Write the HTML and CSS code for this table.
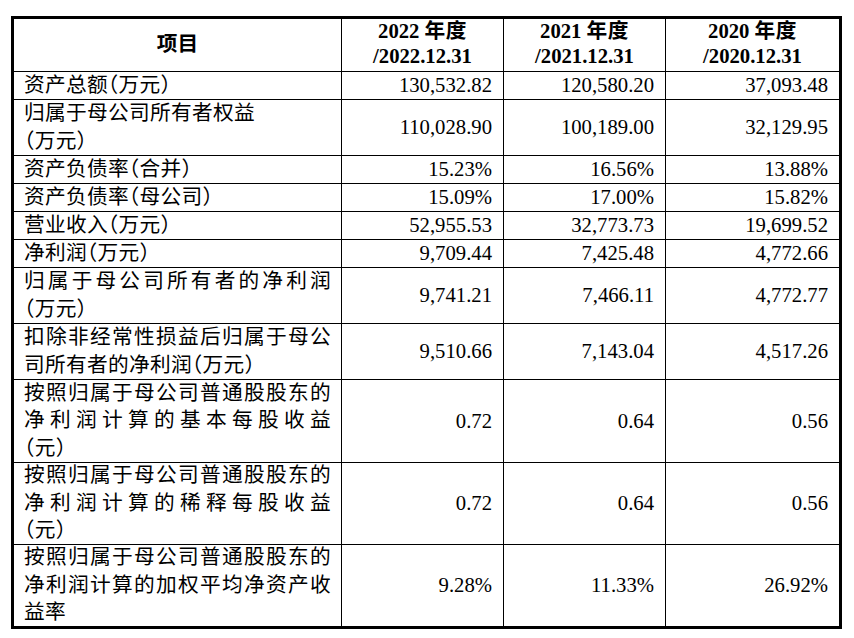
FILE: index.html
```html
<!DOCTYPE html>
<html lang="zh-CN">
<head>
<meta charset="utf-8">
<title>主要财务数据</title>
<link rel="stylesheet" href="styles.css">
</head>
<body>
<div class="tbl">
  <div class="c h"><span class="xm">项目</span></div>
  <div class="c h"><span>2022 <span class="cj">年度</span></span><span class="d">/2022.12.31</span></div>
  <div class="c h"><span>2021 <span class="cj">年度</span></span><span class="d">/2021.12.31</span></div>
  <div class="c h"><span>2020 <span class="cj">年度</span></span><span class="d">/2020.12.31</span></div>

  <div class="c l"><span>资产总额（万元）</span></div>
  <div class="c n">130,532.82</div>
  <div class="c n">120,580.20</div>
  <div class="c n">37,093.48</div>

  <div class="c l"><span>归属于母公司所有者权益</span><span>（万元）</span></div>
  <div class="c n">110,028.90</div>
  <div class="c n">100,189.00</div>
  <div class="c n">32,129.95</div>

  <div class="c l"><span>资产负债率（合并）</span></div>
  <div class="c n">15.23%</div>
  <div class="c n">16.56%</div>
  <div class="c n">13.88%</div>

  <div class="c l"><span>资产负债率（母公司）</span></div>
  <div class="c n">15.09%</div>
  <div class="c n">17.00%</div>
  <div class="c n">15.82%</div>

  <div class="c l"><span>营业收入（万元）</span></div>
  <div class="c n">52,955.53</div>
  <div class="c n">32,773.73</div>
  <div class="c n">19,699.52</div>

  <div class="c l"><span>净利润（万元）</span></div>
  <div class="c n">9,709.44</div>
  <div class="c n">7,425.48</div>
  <div class="c n">4,772.66</div>

  <div class="c l"><span class="j">归属于母公司所有者的净利润</span><span>（万元）</span></div>
  <div class="c n">9,741.21</div>
  <div class="c n">7,466.11</div>
  <div class="c n">4,772.77</div>

  <div class="c l"><span class="j">扣除非经常性损益后归属于母公</span><span>司所有者的净利润（万元）</span></div>
  <div class="c n">9,510.66</div>
  <div class="c n">7,143.04</div>
  <div class="c n">4,517.26</div>

  <div class="c l"><span class="j">按照归属于母公司普通股股东的</span><span class="j">净利润计算的基本每股收益</span><span>（元）</span></div>
  <div class="c n">0.72</div>
  <div class="c n">0.64</div>
  <div class="c n">0.56</div>

  <div class="c l"><span class="j">按照归属于母公司普通股股东的</span><span class="j">净利润计算的稀释每股收益</span><span>（元）</span></div>
  <div class="c n">0.72</div>
  <div class="c n">0.64</div>
  <div class="c n">0.56</div>

  <div class="c l"><span class="j">按照归属于母公司普通股股东的</span><span class="j">净利润计算的加权平均净资产收</span><span>益率</span></div>
  <div class="c n">9.28%</div>
  <div class="c n">11.33%</div>
  <div class="c n">26.92%</div>
</div>
</body>
</html>
```
FILE: styles.css
```css
html, body {
  margin: 0;
  padding: 0;
  background: #ffffff;
}

body {
  padding: 16px 0 0 11px;
  font-family: "Liberation Serif", "Noto Sans CJK SC", serif;
  font-size: 20.7px;
  color: #000000;
}

.tbl {
  width: 831px;
  box-sizing: border-box;
  border: 3px solid #000000;
  display: grid;
  grid-template-columns: 328px 162px 162px 173px;
  grid-template-rows: 53px 28px 56px 28px 28px 28px 28px 56px 56px 83px 82px 81px;
}

.c {
  box-sizing: border-box;
  border-right: 1px solid #000000;
  border-bottom: 1px solid #000000;
  display: flex;
  min-width: 0;
}

.c:nth-child(4n) {
  border-right: 0;
}

.c:nth-last-child(-n+4) {
  border-bottom: 0;
}

.h {
  flex-direction: column;
  align-items: center;
  justify-content: center;
  font-weight: bold;
  line-height: 25px;
  padding-bottom: 2px;
}

.h .cj {
  letter-spacing: 0.5px;
}

.l {
  flex-direction: column;
  justify-content: center;
  padding: 0 10px 0 10px;
  line-height: 27.4px;
  letter-spacing: 0.3px;
  font-feature-settings: "halt";
}

.l span {
  display: block;
  white-space: nowrap;
}

.l .j {
  text-align: justify;
  text-align-last: justify;
}

.n {
  align-items: center;
  justify-content: flex-end;
  padding-right: 11px;
  white-space: nowrap;
}
```
